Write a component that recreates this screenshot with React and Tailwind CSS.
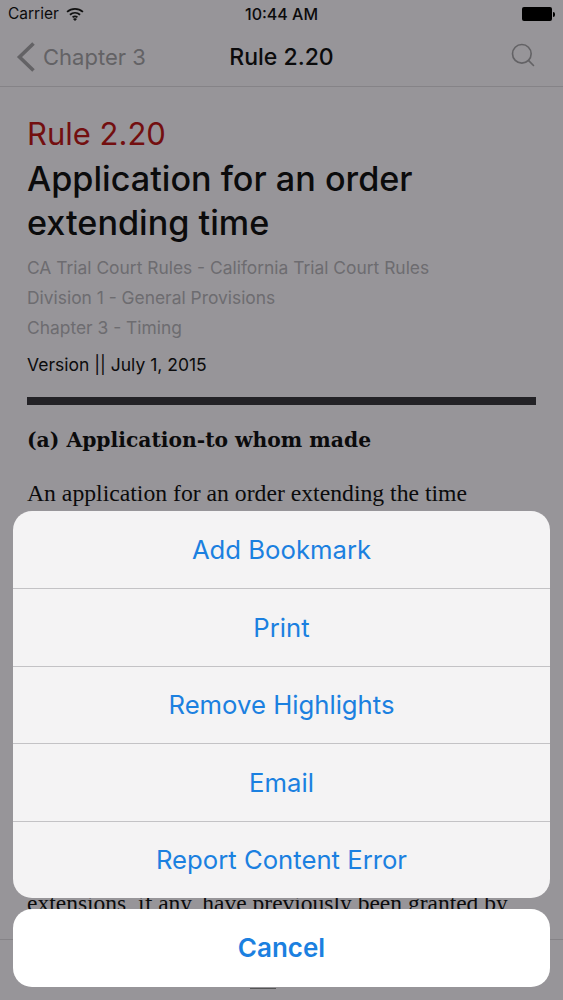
import React from 'react';
import { Search } from 'lucide-react';

const actions = ['Add Bookmark', 'Print', 'Remove Highlights', 'Email', 'Report Content Error'];

const App = () => {
    return (
        <div className="relative h-[1000px] w-[563px] overflow-hidden bg-[#979599] font-['Inter',sans-serif] text-[#0b0b0c]">
            <div className="flex h-[28px] items-center justify-between pl-[8px] pr-[8px] text-[15.5px]">
                <div className="flex w-[180px] items-center gap-[7px]">
                    <span>Carrier</span>
                    <svg width="18" height="14" viewBox="0 0 17 13" fill="none" stroke="#111" strokeWidth="1.7">
                        <path d="M1 4.5C5.5 .6 11.5 .6 16 4.5" />
                        <path d="M3.7 7.2C6.5 4.8 10.5 4.8 13.3 7.2" />
                        <path d="M6.2 9.6C7.6 8.6 9.4 8.6 10.8 9.6" />
                        <path d="M8.5 12.8 7 11.2C8 10.6 9 10.6 10 11.2Z" fill="#111" strokeWidth="0.5" />
                    </svg>
                </div>
                <span className="text-[16px] font-medium">10:44 AM</span>
                <div className="flex w-[180px] items-center justify-end">
                    <div className="h-[14px] w-[30px] rounded-[2px] bg-black" />
                    <div className="ml-[1px] h-[5px] w-[2px] rounded-r-sm bg-black" />
                </div>
            </div>
            <div className="flex h-[59px] items-center justify-between border-b border-[#858387]">
                <div className="flex w-[180px] items-center gap-[7px] pl-[16px] text-[#636265]">
                    <svg width="20" height="32" viewBox="0 0 20 32" fill="none" stroke="currentColor" strokeWidth="3.6" className="shrink-0">
                        <path d="M17.5 2.5 3.5 16l14 13.5" />
                    </svg>
                    <span className="text-[22px]">Chapter 3</span>
                </div>
                <span className="text-[23px] font-medium">Rule 2.20</span>
                <div className="flex w-[180px] justify-end pr-[26px]">
                    <Search size={28} strokeWidth={1.4} className="-mt-[4px] text-[#636265]" />
                </div>
            </div>
            <div className="px-[27px] pt-[28px]">
                <div className="text-[31px] leading-[38px] text-[#730f10]">Rule 2.20</div>
                <h1 className="mt-[4px] text-[34.2px] font-medium leading-[44px]">Application for an order extending time</h1>
                <div className="mt-[8px] text-[17.4px] leading-[30px] text-[#6d6c70]">
                    <div>CA Trial Court Rules - California Trial Court Rules</div>
                    <div>Division 1 - General Provisions</div>
                    <div>Chapter 3 - Timing</div>
                </div>
                <div className="mt-[7px] text-[17.5px] leading-[30px]">Version || July 1, 2015</div>
                <div className="mt-[17px] h-[8px] bg-[#232226]" />
                <h2 className="mt-[20px] font-['DejaVu_Serif',serif] text-[20.3px] font-bold leading-[30px]">(a) Application-to whom made</h2>
                <p className="mt-[23px] font-['Liberation_Serif',serif] text-[23.7px] leading-[30px]">An application for an order extending the time</p>
            </div>
            <div className="absolute bottom-0 left-0 right-0 h-[61px] border-t border-[#858387]">
                <div className="absolute left-[250px] top-[48px] h-[1px] w-[26px] bg-[#555]" />
            </div>
            <div className="absolute left-0 right-0 top-[888px] px-[27px] font-['Liberation_Serif',serif] text-[23.5px] leading-[30px]">extensions, if any, have previously been granted by</div>
            <div className="absolute left-[13px] top-[511px] w-[537px]">
                <div className="overflow-hidden rounded-[19px] bg-[#f4f3f4]">
                    {actions.map((label, i) => (
                        <div key={label} className={`flex h-[77.4px] items-center justify-center pt-[1px] text-[25.7px] text-[#1b80e0] ${i > 0 ? 'border-t border-[#c3c2c5]' : ''}`}>
                            {label}
                        </div>
                    ))}
                </div>
                <div className="mt-[11px] flex h-[78px] items-center justify-center rounded-[19px] bg-white text-[26px] font-semibold text-[#1b80e0]">Cancel</div>
            </div>
        </div>
    );
};

export default App;
